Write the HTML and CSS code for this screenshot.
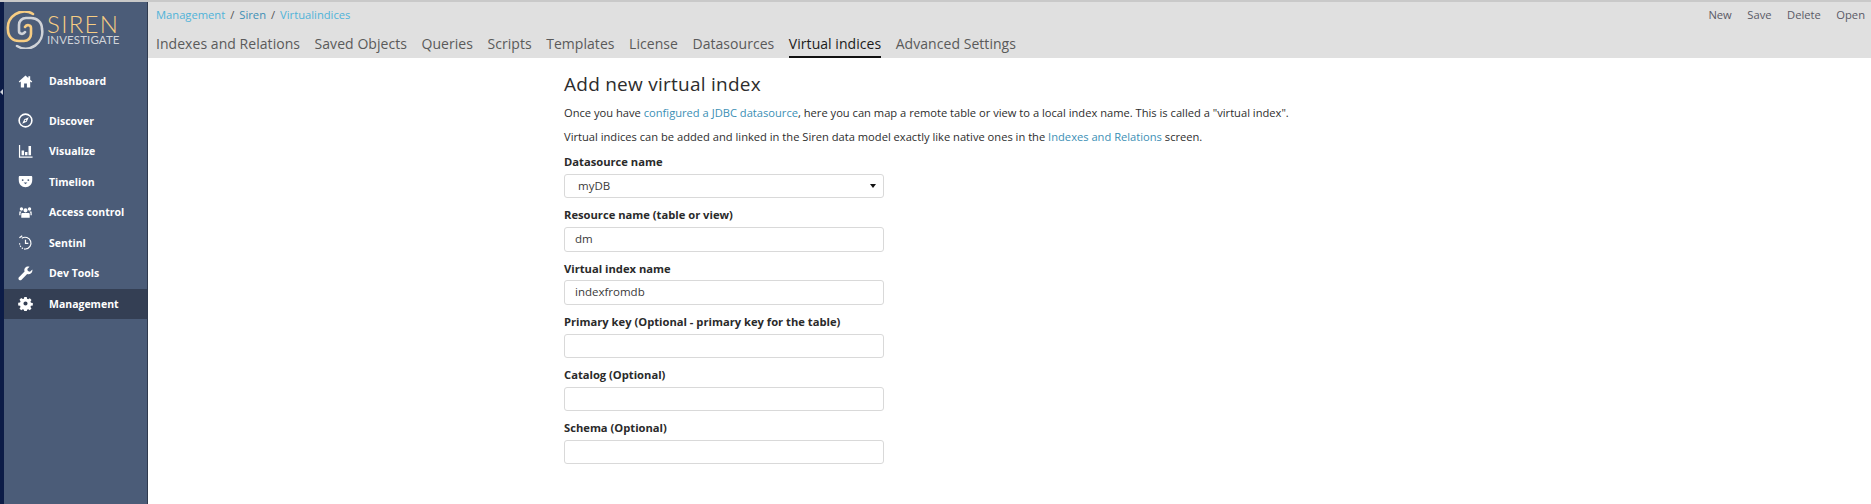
FILE: index.html
```html
<!DOCTYPE html>
<html lang="en">
<head>
<meta charset="utf-8">
<title>Siren Investigate</title>
<link rel="stylesheet" href="styles.css">
</head>
<body>
<div class="app">
  <div class="strip"><span class="strip-arrow"></span></div>
  <aside class="sidebar">
    <div class="logo">
      <svg class="logo-mark" width="38" height="38" viewBox="0 0 38 38" fill="none" stroke-width="2.600" stroke-linecap="round">
        <path stroke="#d0d3d8" d="M11 35A16.500 16.500 0 0 0 36 18C36 11 31 7 25 7H20C16 7 13 10 13 14V20C13 23 17 24 19 21"/>
        <path stroke="#f7cd83" d="M27 3A16.500 16.500 0 0 0 2 19C2 26 7 30 13 30H18C22 30 25 27 25 23V17C25 14 21 13 19 16"/>
      </svg>
      <div class="logo-text">
        <span class="logo-top">SIREN</span>
        <span class="logo-bottom">INVESTIGATE</span>
      </div>
    </div>
    <nav class="nav">
      <a class="nav-item nav-first"><svg class="ico" viewBox="0 0 16 16"><path fill="#fff" d="M8 1.500 0.800 8l1 1L3 8v6.500h3.500V10h3v4.500H13V8l1.200 1 1-1L13 6V2.500h-2v1.700z"/></svg><span>Dashboard</span></a>
      <a class="nav-item nav-gap"><svg class="ico" viewBox="0 0 16 16"><circle cx="8" cy="8" r="6.800" fill="none" stroke="#fff" stroke-width="1.700"/><path fill="#fff" d="M11.500 4.500 9.300 9.300 4.500 11.500 6.700 6.700zM8 7.200a.8.8 0 1 0 0 1.600.8.8 0 0 0 0-1.600z" fill-rule="evenodd"/></svg><span>Discover</span></a>
      <a class="nav-item"><svg class="ico" viewBox="0 0 16 16"><path fill="#fff" d="M1 1h1.300v12.400H15.500v1.300H1zM3.800 7h2.700v5H3.800zM7.500 8.500h2.600V12H7.500zM11.200 2h2.700v10h-2.700z"/></svg><span>Visualize</span></a>
      <a class="nav-item"><svg class="ico" viewBox="0 0 16 16"><path fill="#fff" fill-rule="evenodd" d="M2 2h12c.8 0 1.200.6 1.200 1.200V6c0 5-3.200 8-7.200 8S.8 11 .8 6V3.200C.8 2.600 1.200 2 2 2zM5 5.500a1 1 0 1 0 0 2 1 1 0 0 0 0-2zm6 0a1 1 0 1 0 0 2 1 1 0 0 0 0-2zM6 9l2 2 2-2z"/></svg><span>Timelion</span></a>
      <a class="nav-item"><svg class="ico" viewBox="0 0 16 16"><path fill="#fff" d="M8 3.500a2.200 2.200 0 1 1 0 4.400 2.200 2.200 0 0 1 0-4.400zM3.700 2.500a1.800 1.800 0 1 1 0 3.600 1.800 1.800 0 0 1 0-3.600zM12.300 2.500a1.800 1.800 0 1 1 0 3.600 1.800 1.800 0 0 1 0-3.600zM4.800 8.500h6.400c.8 0 1.300.6 1.300 1.300v3.700h-9V9.800c0-.7.500-1.300 1.300-1.300zM1.500 7h2.300L2.700 8.500v2.500H1.300zM12.200 7h2.300l.2 4h-1.400V8.500z"/></svg><span>Access control</span></a>
      <a class="nav-item"><svg class="ico" viewBox="0 0 16 16"><path fill="none" stroke="#fff" stroke-width="1.200" d="M4 3.500A6.300 6.300 0 1 1 8 15"/><path fill="none" stroke="#fff" stroke-width="1.200" stroke-dasharray="1.500 1.200" d="M8 15A6.300 6.300 0 0 1 1.700 8.700"/><path fill="none" stroke="#fff" stroke-width="1.300" d="M8 5v4h3M1.500 3 4.500 .8"/></svg><span>Sentinl</span></a>
      <a class="nav-item"><svg class="ico" viewBox="0 0 16 16"><path fill="#fff" d="M15.300 3.600 12.800 6l-2.300-.6L9.900 3.200 12.300.8C10.500.1 8.700.6 7.700 1.900 6.700 3 6.500 4.600 7 5.900L1 11.900c-.7.700-.7 1.900 0 2.700.8.800 2 .8 2.800 0l6-6c1.400.5 3 .2 4.100-.8 1.200-1.200 1.700-2.900 1.400-4.200z"/></svg><span>Dev Tools</span></a>
      <a class="nav-item nav-active"><svg class="ico" viewBox="0 0 16 16"><path fill="#fff" fill-rule="evenodd" d="M6.700 1h2.600l.4 2 1.200.5 1.700-1.100 1.800 1.800-1.100 1.700.5 1.200 2 .4v2.600l-2 .4-.5 1.200 1.100 1.700-1.800 1.800-1.700-1.100-1.200.5-.4 2H6.700l-.4-2-1.200-.5-1.700 1.100-1.800-1.800 1.100-1.700-.5-1.200-2-.4V7.300l2-.4.5-1.200-1.100-1.700 1.800-1.800 1.700 1.100 1.200-.5zM8 5.800a2.200 2.200 0 1 0 0 4.400 2.200 2.200 0 0 0 0-4.400z"/></svg><span>Management</span></a>
    </nav>
  </aside>
  <main class="main">
    <header class="header">
      <div class="header-top">
        <div class="crumbs">
          <a class="crumb-light">Management</a><span class="sep">/</span><a class="crumb-dark">Siren</a><span class="sep">/</span><a class="crumb-light">Virtualindices</a>
        </div>
        <div class="actions"><a>New</a><a>Save</a><a>Delete</a><a>Open</a></div>
      </div>
      <div class="tabs">
        <a class="tab">Indexes and Relations</a>
        <a class="tab">Saved Objects</a>
        <a class="tab">Queries</a>
        <a class="tab">Scripts</a>
        <a class="tab">Templates</a>
        <a class="tab">License</a>
        <a class="tab">Datasources</a>
        <a class="tab tab-active">Virtual indices</a>
        <a class="tab">Advanced Settings</a>
      </div>
    </header>
    <section class="content">
      <h1 class="title">Add new virtual index</h1>
      <p class="para para-first">Once you have <a class="link">configured a JDBC datasource</a>, here you can map a remote table or view to a local index name. This is called a "virtual index".</p>
      <p class="para">Virtual indices can be added and linked in the Siren data model exactly like native ones in the <a class="link">Indexes and Relations</a> screen.</p>
      <form class="form">
        <div class="field">
          <label class="label">Datasource name</label>
          <div class="select"><span>myDB</span><span class="caret"></span></div>
        </div>
        <div class="field">
          <label class="label">Resource name (table or view)</label>
          <div class="input">dm</div>
        </div>
        <div class="field">
          <label class="label">Virtual index name</label>
          <div class="input">indexfromdb</div>
        </div>
        <div class="field">
          <label class="label">Primary key (Optional - primary key for the table)</label>
          <div class="input"></div>
        </div>
        <div class="field">
          <label class="label">Catalog (Optional)</label>
          <div class="input"></div>
        </div>
        <div class="field">
          <label class="label">Schema (Optional)</label>
          <div class="input"></div>
        </div>
      </form>
    </section>
  </main>
</div>
</body>
</html>
```
FILE: styles.css
```css
* { box-sizing: border-box; }
html, body { margin: 0; height: 100%; }
body {
  font-family: "Open Sans", "Noto Sans", sans-serif;
  font-size: 12px;
  color: #2d2d2d;
  background: #fff;
  overflow: hidden;
}
.app {
  display: flex;
  height: 504px;
  border-top: 2px solid #c9c9c9;
}
.strip {
  width: 4px;
  flex: none;
  background: #0c1c47;
  position: relative;
}
.strip-arrow {
  position: absolute;
  left: 0;
  top: 87px;
  border-style: solid;
  border-width: 3px 3px 3px 0;
  border-color: transparent #cfd3dc transparent transparent;
}
.sidebar {
  width: 144px;
  flex: none;
  background: #4b5c78;
  border-right: 1px solid #2f3a4e;
  color: #fff;
}
.logo {
  height: 46px;
  padding: 9px 0 0 2px;
  display: flex;
  gap: 3px;
}
.logo-mark { flex: none; }
.logo-text {
  display: flex;
  flex-direction: column;
  align-items: flex-start;
  padding-top: 2px;
}
.logo-top {
  font-family: "Lato", sans-serif;
  font-weight: 300;
  font-size: 24px;
  line-height: 21px;
  letter-spacing: 1.300px;
  color: #f7cd83;
}
.logo-bottom {
  font-family: "Lato", sans-serif;
  font-weight: 400;
  font-size: 11.500px;
  line-height: 12px;
  letter-spacing: .1px;
  color: #d0d3d8;
}
.nav {
  display: flex;
  flex-direction: column;
  padding-top: 18px;
}
.nav-item {
  display: flex;
  align-items: center;
  height: 30.500px;
  padding-left: 13.500px;
  gap: 16.500px;
  font-size: 10.500px;
  font-weight: 700;
  color: #fff;
}
.nav-gap { margin-top: 9px; }
.nav-active { background: #343f54; }
.ico { width: 15px; height: 15px; flex: none; }
.main {
  flex: 1;
  min-width: 0;
  display: flex;
  flex-direction: column;
}
.header {
  height: 56px;
  flex: none;
  background: #e0e0e0;
  padding: 0 6px 0 8px;
  display: flex;
  flex-direction: column;
}
.header-top {
  display: flex;
  justify-content: space-between;
  padding-top: 5px;
  height: 30px;
}
.crumbs {
  font-size: 11.200px;
  line-height: 16px;
}
.crumb-light { color: #4fb3d9; }
.crumb-dark { color: #3d8fb5; }
.sep { margin: 0 5px; color: #555; }
.actions {
  display: flex;
  gap: 15.500px;
  font-size: 11.200px;
  line-height: 16px;
  color: #5a5a66;
}
.tabs {
  display: flex;
  gap: 14.500px;
  font-size: 14px;
  letter-spacing: .05px;
  height: 26px;
  color: #5a5a5a;
}
.tab {
  line-height: 24px;
  height: 26px;
}
.tab-active {
  color: #1a1a1a;
  border-bottom: 2px solid #111;
}
.content {
  padding: 14px 0 0 416px;
  width: 1200px;
}
.title {
  margin: 0;
  font-size: 19px;
  font-weight: 400;
  line-height: 24px;
  letter-spacing: .25px;
  color: #2d2d2d;
}
.para {
  margin: 8px 0 0;
  font-size: 11.150px;
  line-height: 16px;
  white-space: nowrap;
}
.para-first { margin-top: 9px; }
.link { color: #3b8fb5; }
.form {
  margin-top: 8.200px;
  width: 320px;
  display: flex;
  flex-direction: column;
  gap: 8px;
}
.field {
  display: flex;
  flex-direction: column;
}
.label {
  font-weight: 700;
  font-size: 11.200px;
  line-height: 18px;
  margin-bottom: 2.800px;
  color: #2a2a2a;
  white-space: nowrap;
}
.input, .select {
  height: 24.400px;
  border: 1px solid #d9d9d9;
  border-radius: 3px;
  background: #fff;
  padding: 0 10px;
  font-size: 11.500px;
  line-height: 22px;
  color: #3a3a3a;
}
.select {
  display: flex;
  justify-content: space-between;
  align-items: center;
  padding: 0 7px 0 13px;
}
.caret {
  border-style: solid;
  border-width: 4px 3.500px 0;
  border-color: #111 transparent transparent;
}
```
